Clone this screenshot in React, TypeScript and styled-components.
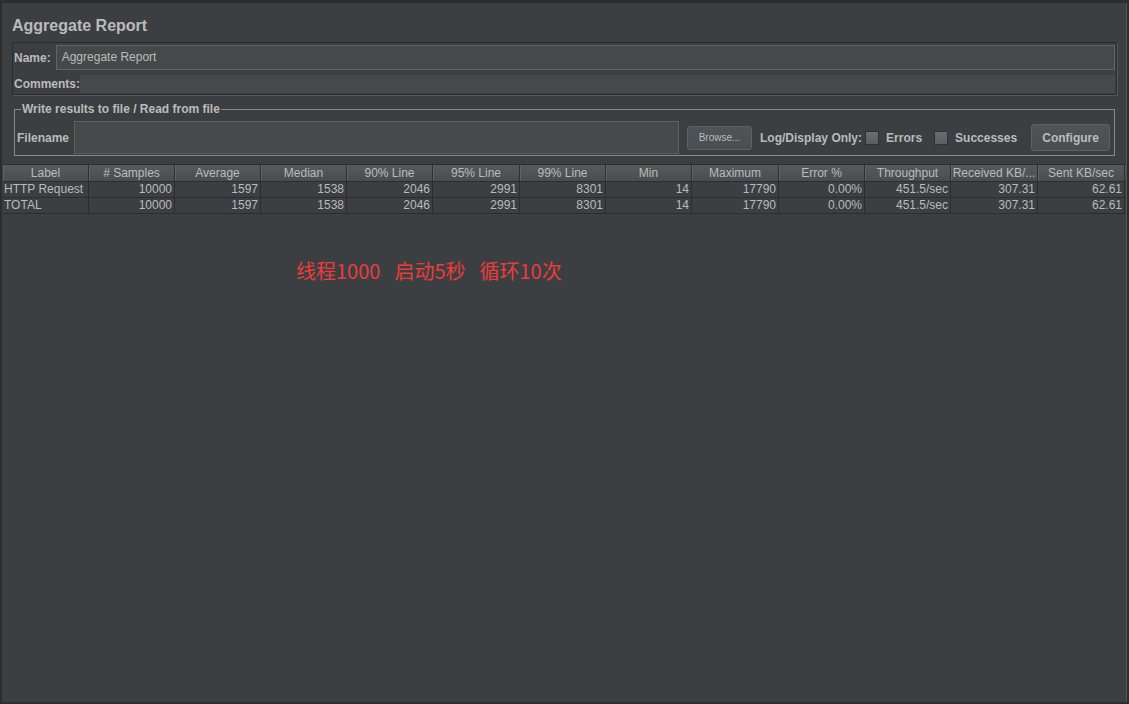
import React from "react";
import styled, { createGlobalStyle } from "styled-components";

const Global = createGlobalStyle`
  html, body { margin: 0; padding: 0; background: #3c3f41; }
  body { font-family: "Liberation Sans", Arial, sans-serif; font-size: 12px; color: #bbbbbb; }
  * { box-sizing: border-box; }
`;

const Frame = styled.div`
  width: 1129px;
  height: 704px;
  background: #3c3f41;
  border-top: 3px solid #2b2d2f;
  border-left: 2px solid #2b2d2f;
  border-right: 2px solid #2b2d2f;
  border-bottom: 2px solid #2b2d2f;
  display: flex;
  flex-direction: column;
  overflow: hidden;
  position: relative;
`;

const RightEdge = styled.div`
  position: absolute;
  top: 0;
  right: 0;
  width: 1px;
  height: 100%;
  background: #55585a;
`;

const Title = styled.div`
  font-weight: bold;
  font-size: 16px;
  color: #bbbbbb;
  height: 39px;
  padding: 13px 0 0 10px;
  line-height: 20px;
`;

const NamePanel = styled.div`
  margin-left: 10px;
  width: 1105px;
  height: 53px;
  border: 1px solid #2a2c2e;
  box-shadow: 1px 1px 0 #55585a;
  padding: 2px 1px 0 1px;
  display: flex;
  flex-direction: column;
  gap: 5px;
  flex-shrink: 0;
`;

const FieldRow = styled.div`
  display: flex;
  align-items: center;
`;

const BoldLabel = styled.span<{ $ml?: number; $mr?: number }>`
  font-weight: bold;
  font-size: 12px;
  color: #bbbbbb;
  white-space: nowrap;
  margin-left: ${(p) => p.$ml ?? 0}px;
  margin-right: ${(p) => p.$mr ?? 0}px;
`;

const TextField = styled.div<{ $h: number; $bordered?: boolean }>`
  flex: 1;
  height: ${(p) => p.$h}px;
  background: #45494a;
  border: ${(p) => (p.$bordered ? "1px solid #646464" : "none")};
  display: flex;
  align-items: center;
  padding: 0 0 1px 5px;
  font-size: 12px;
  color: #bbbbbb;
`;

const FileSet = styled.fieldset`
  margin: 7px 0 0 12px;
  width: 1101px;
  min-width: 0;
  border: 1px solid #8a8a8a;
  padding: 5px 4px 1px 2px;
  flex-shrink: 0;
`;

const Legend = styled.legend`
  font-weight: bold;
  font-size: 12px;
  color: #bbbbbb;
  padding: 0 1px;
  margin-left: 4px;
  line-height: 14px;
`;

const FileInner = styled.div`
  display: flex;
  align-items: center;
  width: 100%;
`;

const FileField = styled.div`
  width: 605px;
  height: 33px;
  background: #45494a;
  border: 1px solid #5e6060;
  margin-left: 5px;
  flex-shrink: 0;
`;

const Button = styled.button<{ $w: number; $h: number; $bold?: boolean; $fs: number; $ml: number }>`
  width: ${(p) => p.$w}px;
  height: ${(p) => p.$h}px;
  margin-left: ${(p) => p.$ml}px;
  background: linear-gradient(#4f5456, #4a4e50);
  border: 1px solid #5e6163;
  border-radius: 3px;
  color: #bbbbbb;
  font-family: "Liberation Sans", Arial, sans-serif;
  font-size: ${(p) => p.$fs}px;
  font-weight: ${(p) => (p.$bold ? "bold" : "normal")};
  padding: 0;
  flex-shrink: 0;
`;

const CheckGroup = styled.label<{ $ml?: number }>`
  display: flex;
  align-items: center;
  gap: 7px;
  margin-left: ${(p) => p.$ml ?? 0}px;
  font-weight: bold;
  font-size: 12px;
  color: #bbbbbb;
  white-space: nowrap;
`;

const CheckBox = styled.span`
  width: 14px;
  height: 14px;
  background: linear-gradient(#6a6d6f, #5c5f61);
  border: 1px solid #2f3133;
  border-radius: 1px;
  display: inline-block;
`;

const Table = styled.div`
  margin-top: 8px;
  margin-left: 1px;
  flex: 1;
  display: flex;
  flex-direction: column;
  border-top: 1px solid #2b2d2f;
`;

const cols = "86px 86px 86px 86px 86px 87px 86px 86px 87px 86px 86px 87px 87px";

const HeaderRow = styled.div`
  display: grid;
  grid-template-columns: ${cols};
  height: 17px;
  background: linear-gradient(#565a5c, #4a4d4f);
  border-bottom: 1px solid #2b2d2f;
`;

const HeaderCell = styled.div`
  text-align: center;
  font-size: 12px;
  line-height: 16px;
  color: #bbbbbb;
  border-right: 1px solid #2f3133;
  box-shadow: inset 1px 0 0 #5f6365;
  white-space: nowrap;
  overflow: hidden;
`;

const BodyRow = styled.div`
  display: grid;
  grid-template-columns: ${cols};
  height: 16px;
  border-bottom: 1px solid #2b2d2f;
`;

const Cell = styled.div<{ $left?: boolean }>`
  text-align: ${(p) => (p.$left ? "left" : "right")};
  padding: 0 2px 0 1px;
  font-size: 12px;
  line-height: 15px;
  color: #bbbbbb;
  border-right: 1px solid #2b2d2f;
  white-space: nowrap;
  overflow: hidden;
`;

const Annotation = styled.div`
  margin: 43px 0 0 293px;
  display: flex;
  gap: 14px;
  font-family: "Noto Sans CJK SC", "Liberation Sans", sans-serif;
  font-size: 20px;
  font-weight: normal;
  line-height: 28px;
  color: #ec3b3b;
`;

const headers = [
  "Label",
  "# Samples",
  "Average",
  "Median",
  "90% Line",
  "95% Line",
  "99% Line",
  "Min",
  "Maximum",
  "Error %",
  "Throughput",
  "Received KB/...",
  "Sent KB/sec",
];

const rows = [
  ["HTTP Request", "10000", "1597", "1538", "2046", "2991", "8301", "14", "17790", "0.00%", "451.5/sec", "307.31", "62.61"],
  ["TOTAL", "10000", "1597", "1538", "2046", "2991", "8301", "14", "17790", "0.00%", "451.5/sec", "307.31", "62.61"],
];

export default function App() {
  return (
    <>
      <Global />
      <Frame>
        <RightEdge />
        <Title>Aggregate Report</Title>
        <NamePanel>
          <FieldRow>
            <BoldLabel $mr={5}>Name:</BoldLabel>
            <TextField $h={25} $bordered>Aggregate Report</TextField>
          </FieldRow>
          <FieldRow>
            <BoldLabel>Comments:</BoldLabel>
            <TextField $h={18} />
          </FieldRow>
        </NamePanel>
        <FileSet>
          <Legend>Write results to file / Read from file</Legend>
          <FileInner>
            <BoldLabel>Filename</BoldLabel>
            <FileField />
            <Button $w={65} $h={24} $fs={10} $ml={8}>
              Browse...
            </Button>
            <BoldLabel $ml={8} $mr={3}>Log/Display Only:</BoldLabel>
            <CheckGroup>
              <CheckBox />
              Errors
            </CheckGroup>
            <CheckGroup $ml={12}>
              <CheckBox />
              Successes
            </CheckGroup>
            <Button $w={79} $h={27} $fs={12} $bold $ml={14}>
              Configure
            </Button>
          </FileInner>
        </FileSet>
        <Table>
          <HeaderRow>
            {headers.map((h) => (
              <HeaderCell key={h}>{h}</HeaderCell>
            ))}
          </HeaderRow>
          {rows.map((r, i) => (
            <BodyRow key={i}>
              {r.map((v, j) => (
                <Cell key={j} $left={j === 0}>
                  {v}
                </Cell>
              ))}
            </BodyRow>
          ))}
          <Annotation>
            <span>线程1000</span>
            <span>启动5秒</span>
            <span>循环10次</span>
          </Annotation>
        </Table>
      </Frame>
    </>
  );
}
